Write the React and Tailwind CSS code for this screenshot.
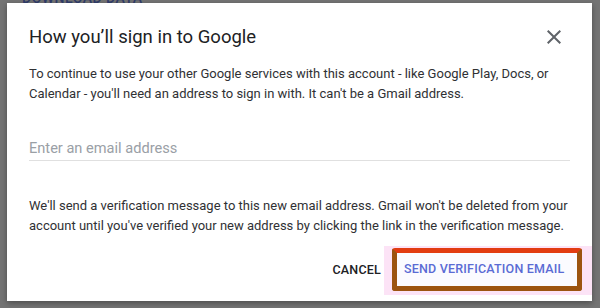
export default function App() {
  return (
    <div className="w-[600px] h-[308px] overflow-hidden bg-[#747474] font-['Roboto','Liberation_Sans',sans-serif]">
      {/* page behind the backdrop, only a sliver is visible */}
      <div className="h-[3px] overflow-hidden pl-[22px]">
        <div className="-mt-[10px] text-[14px] leading-[16px] font-medium tracking-[0.5px] text-[#2e3a66]">
          DOWNLOAD DATA
        </div>
      </div>

      <div className="ml-[7px] w-[585px] h-[298px] bg-white shadow-[0_2px_6px_rgba(0,0,0,0.35)] flex flex-col">
        <div className="flex items-center justify-between pt-[20px] pl-[22px] pr-[26px]">
          <h1 className="text-[18.5px] leading-[28px] text-[#202124]">How you’ll sign in to Google</h1>
          <svg viewBox="0 0 24 24" className="w-6 h-6" fill="#5f6368">
            <path d="M19 6.41 17.59 5 12 10.59 6.41 5 5 6.41 10.59 12 5 17.59 6.41 19 12 13.41 17.59 19 19 17.59 13.41 12z" />
          </svg>
        </div>

        <p className="mt-[13px] pl-[22px] pr-[10px] text-[13px] leading-[20px] text-[#303134]">
          To continue to use your other Google services with this account - like Google Play, Docs, or Calendar - you'll need an
          address to sign in with. It can't be a Gmail address.
        </p>

        <div className="mt-[32px] mx-[22px] border-b border-[#e0e0e0]">
          <div className="text-[14.6px] leading-[24px] text-[#9aa0a6]">Enter an email address</div>
        </div>

        <p className="mt-[35px] pl-[22px] pr-[14px] text-[13px] leading-[20px] text-[#303134]">
          We'll send a verification message to this new email address. Gmail won't be deleted from your account until you've
          verified your new address by clicking the link in the verification message.
        </p>

        <div className="mt-[10px] flex items-center justify-end">
          <span className="mr-[3px] text-[12.5px] font-medium tracking-[0.2px] text-[#202124]">CANCEL</span>
          <div className="bg-[#fce3f6] pl-[8px] pr-[10px] pt-[2px] pb-[4px]">
            <div className="w-[190px] h-[43px] rounded-[3px] border-[5px] border-[#9c5410] border-t-[#e23c12] bg-[#fbfbff] flex items-center pl-[7px]">
              <span className="text-[12.5px] font-medium tracking-[0.2px] text-[#5a6bd4]">SEND VERIFICATION EMAIL</span>
            </div>
          </div>
        </div>
      </div>
    </div>
  )
}
